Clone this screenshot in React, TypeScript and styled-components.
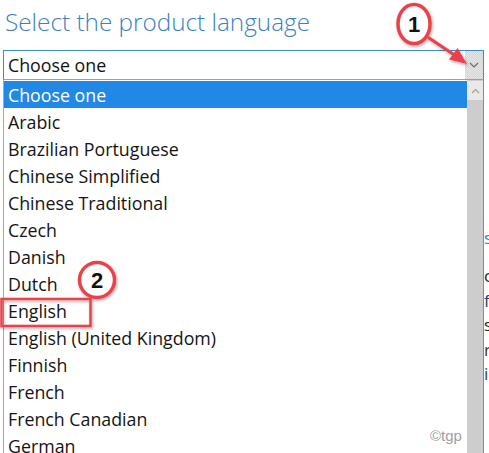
import React from "react";
import styled, { createGlobalStyle } from "styled-components";

const Global = createGlobalStyle`
  html, body { margin: 0; padding: 0; background: #ffffff; }
  body { width: 489px; height: 453px; overflow: hidden; font-family: "Open Sans", "Noto Sans", sans-serif; }
`;

const Page = styled.div`
  position: relative;
  display: flex;
  width: 489px;
  height: 453px;
  overflow: hidden;
`;

const Main = styled.div`
  width: 481px;
  padding-left: 3px;
  flex: none;
`;

const Title = styled.h1`
  margin: 0;
  height: 50px;
  padding-left: 2px;
  box-sizing: border-box;
  padding-top: 4px;
  font-family: "Open Sans", sans-serif;
  font-weight: 300;
  font-size: 24.3px;
  line-height: 36px;
  color: #3c7fc2;
  white-space: nowrap;
`;

const SelectBox = styled.div`
  box-sizing: border-box;
  height: 30px;
  border: 1px solid #3a8ad6;
  border-bottom-color: #7aa6cf;
  display: flex;
  align-items: center;
  background: #ffffff;
`;

const SelectText = styled.span`
  flex: 1;
  padding-left: 4px;
  font-size: 17.8px;
  color: #111;
  line-height: 26px;
`;

const ChevronCell = styled.div`
  width: 18px;
  align-self: stretch;
  background: repeating-conic-gradient(#d4d4d4 0 25%, #e6e6e6 0 50%) 0 0 / 2px 2px;
  display: flex;
  align-items: center;
  justify-content: center;
`;

const List = styled.div`
  display: flex;
  height: 373px;
  border-left: 1px solid #a8a8a8;
  border-right: 1px solid #8a8a8a;
  box-sizing: border-box;
`;

const Rows = styled.ul`
  list-style: none;
  margin: 0;
  padding: 1px 0 0 0;
  flex: 1;
  overflow: hidden;
`;

const Row = styled.li<{ $selected?: boolean }>`
  height: 27px;
  line-height: 28px;
  padding-left: 4px;
  font-size: 17.8px;
  white-space: nowrap;
  color: ${(p) => (p.$selected ? "#ffffff" : "#141414")};
  background: ${(p) => (p.$selected ? "#2288e6" : "transparent")};
`;

const Scrollbar = styled.div`
  width: 16px;
  background: #cdcdcd;
  display: flex;
  flex-direction: column;
`;

const ScrollUp = styled.div`
  height: 19px;
  margin-top: 1px;
  background: #e9e9e9;
  display: flex;
  align-items: center;
  justify-content: center;
`;

const Side = styled.div`
  flex: 1;
  overflow: hidden;
  padding-top: 226px;
  font-size: 17px;
  line-height: 24.5px;
  white-space: nowrap;
`;

const SideHead = styled.div`
  color: #2f7bd0;
  height: 38px;
`;

const SideLine = styled.div<{ $color: string }>`
  color: ${(p) => p.$color};
`;

const Overlay = styled.svg`
  position: absolute;
  left: 0;
  top: 0;
  pointer-events: none;
`;

const Watermark = styled.span`
  position: absolute;
  left: 430px;
  top: 427px;
  font-family: "Liberation Sans", Arial, sans-serif;
  font-size: 15px;
  color: #a0a0a0;
`;

const languages = [
  "Choose one",
  "Arabic",
  "Brazilian Portuguese",
  "Chinese Simplified",
  "Chinese Traditional",
  "Czech",
  "Danish",
  "Dutch",
  "English",
  "English (United Kingdom)",
  "Finnish",
  "French",
  "French Canadian",
  "German",
];

const RED = "#e9434c";

export default function App() {
  return (
    <>
      <Global />
      <Page>
        <Main>
          <Title>Select the product language</Title>
          <SelectBox>
            <SelectText>Choose one</SelectText>
            <ChevronCell>
              <svg width="10" height="6" viewBox="0 0 10 6">
                <path d="M1 1 L5 5 L9 1" fill="none" stroke="#6a6a6a" strokeWidth="1.2" />
              </svg>
            </ChevronCell>
          </SelectBox>
          <List>
            <Rows>
              {languages.map((l, i) => (
                <Row key={l} $selected={i === 0}>
                  {l}
                </Row>
              ))}
            </Rows>
            <Scrollbar>
              <ScrollUp>
                <svg width="9" height="6" viewBox="0 0 9 6">
                  <path d="M1 5 L4.5 1.5 L8 5" fill="none" stroke="#a0a0a0" strokeWidth="1.2" />
                </svg>
              </ScrollUp>
            </Scrollbar>
          </List>
        </Main>
        <Side>
          <SideHead>s</SideHead>
          <SideLine $color="#222">c</SideLine>
          <SideLine $color="#1e3f8a">fi</SideLine>
          <SideLine $color="#222">s</SideLine>
          <SideLine $color="#5a2a1a">r</SideLine>
          <SideLine $color="#1e3f8a">ic</SideLine>
        </Side>
        <Overlay width="489" height="453" viewBox="0 0 489 453">
          <defs>
            <filter id="sh" x="-50%" y="-50%" width="200%" height="200%">
              <feDropShadow dx="1" dy="1.5" stdDeviation="1.5" floodColor="#000" floodOpacity="0.35" />
            </filter>
          </defs>
          <g filter="url(#sh)">
            <line x1="429" y1="38" x2="456" y2="56" stroke={RED} strokeWidth="3.2" strokeLinecap="round" />
            <path d="M467 64 L449 59.5 L457.5 48 Z" fill={RED} />
            <ellipse cx="414" cy="24" rx="16" ry="19.5" fill="#fff" stroke={RED} strokeWidth="3.5" />
            <rect x="1.5" y="299" width="89" height="27" fill="none" stroke={RED} strokeWidth="2.5" />
            <circle cx="97" cy="280" r="17.5" fill="#fff" stroke={RED} strokeWidth="3.5" />
          </g>
          <text x="414" y="32" textAnchor="middle" fontFamily="Liberation Sans, Arial, sans-serif" fontWeight="bold" fontSize="22" fill="#111">1</text>
          <text x="97" y="288" textAnchor="middle" fontFamily="Liberation Sans, Arial, sans-serif" fontWeight="bold" fontSize="22" fill="#111">2</text>
        </Overlay>
        <Watermark>©tgp</Watermark>
      </Page>
    </>
  );
}
